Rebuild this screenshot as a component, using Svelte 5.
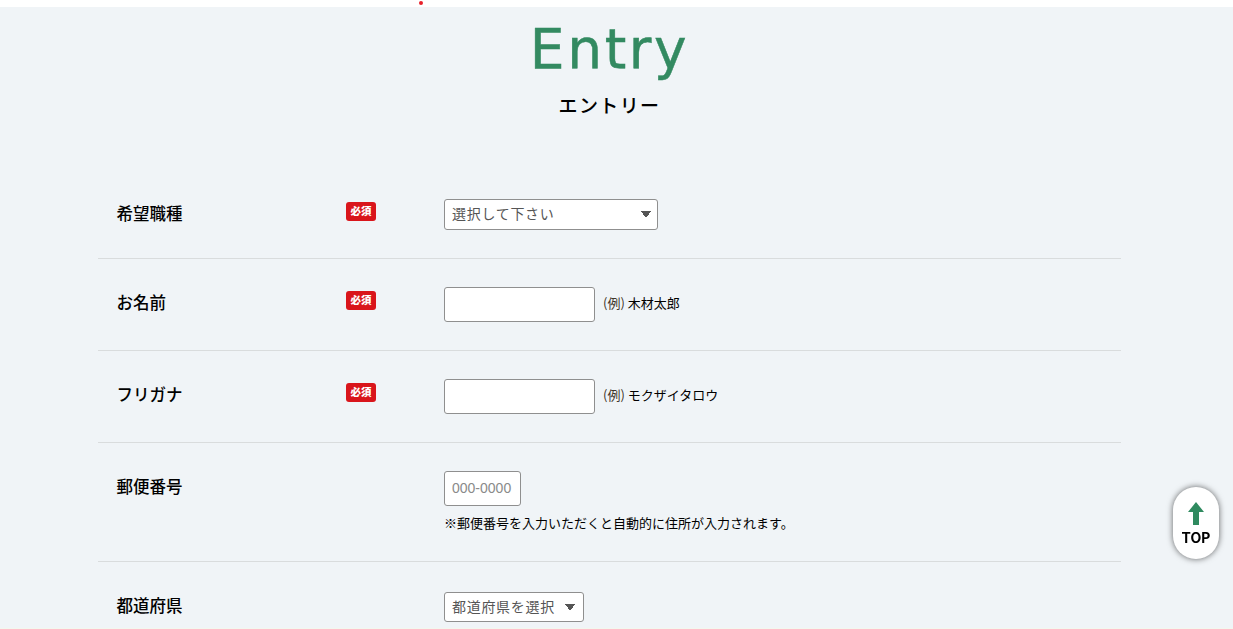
<script lang="ts">
  const prefectures = ["都道府県を選択", "北海道", "東京都", "大阪府"];
</script>

<div class="topbar"><span class="dot"></span></div>

<main class="page">
  <header class="heading">
    <h1>Entry</h1>
    <p>エントリー</p>
  </header>

  <form class="form">
    <div class="row first">
      <div class="label">希望職種</div>
      <div class="req"><span class="badge">必須</span></div>
      <div class="field">
        <select class="job">
          <option>選択して下さい</option>
        </select>
      </div>
    </div>

    <div class="row tall">
      <div class="label">お名前</div>
      <div class="req"><span class="badge">必須</span></div>
      <div class="field inline">
        <input class="text" type="text" />
        <span class="hint"><span class="rei">(例)</span> 木材太郎</span>
      </div>
    </div>

    <div class="row tall">
      <div class="label">フリガナ</div>
      <div class="req"><span class="badge">必須</span></div>
      <div class="field inline">
        <input class="text" type="text" />
        <span class="hint"><span class="rei">(例)</span> モクザイタロウ</span>
      </div>
    </div>

    <div class="row">
      <div class="label">郵便番号</div>
      <div class="req"></div>
      <div class="field">
        <input class="zip" type="text" placeholder="000-0000" />
        <p class="note">※郵便番号を入力いただくと自動的に住所が入力されます。</p>
      </div>
    </div>

    <div class="row">
      <div class="label">都道府県</div>
      <div class="req"></div>
      <div class="field">
        <select class="pref">
          {#each prefectures as pref}
            <option>{pref}</option>
          {/each}
        </select>
      </div>
    </div>
  </form>
</main>

<a class="totop" href="#top">
  <svg width="18" height="25" viewBox="0 0 18 25">
    <path d="M9 1 L17 11 H12 V24 H6 V11 H1 Z" fill="#2f8a5f" />
  </svg>
  <span>TOP</span>
</a>

<style>
  :global(html),
  :global(body) {
    height: 100%;
    overflow: hidden;
  }
  :global(body) {
    background: linear-gradient(to top, #f3f7ee 1px, #f0f4f7 1px);
    color: #000;
    font-family: "Liberation Sans", "Noto Sans CJK JP", sans-serif;
  }
  .topbar {
    height: 7px;
    background: #fff;
    position: relative;
  }
  .dot {
    position: absolute;
    left: 419px;
    top: 1px;
    width: 4px;
    height: 4px;
    border-radius: 50%;
    background: #e8202a;
  }
  .heading {
    width: 1023px;
    margin-left: 98px;
    text-align: center;
    height: 164px;
  }
  h1 {
    margin: 0;
    padding-top: 8px;
    font-family: "DejaVu Sans", sans-serif;
    font-size: 55px;
    font-weight: 400;
    line-height: 68px;
    letter-spacing: 2.6px;
    -webkit-text-stroke: 0.5px #338a61;
    color: #338a61;
  }
  .heading p {
    margin: 0;
    padding-top: 9px;
    font-size: 19px;
    line-height: 26px;
    letter-spacing: 1.4px;
    font-family: "Noto Sans CJK JP", sans-serif;
    font-weight: 500;
  }
  .form {
    width: 1023px;
    margin-left: 98px;
  }
  .row {
    display: grid;
    grid-template-columns: 248px 98px 1fr;
    padding: 28px 0;
    border-bottom: 1px solid #d9dcdd;
  }
  .label {
    padding: 1px 0 0 18.5px;
    font-family: "Noto Sans CJK JP", sans-serif;
    font-size: 16.5px;
    font-weight: 500;
    line-height: 28px;
  }
  .first .label {
    padding-top: 0;
  }
  .badge {
    display: block;
    width: 30px;
    height: 18.5px;
    margin-top: 3px;
    border-radius: 3px;
    background: #d9151b;
    color: #fff;
    font-family: "Noto Sans CJK JP", sans-serif;
    font-size: 10.5px;
    font-weight: 900;
    line-height: 18px;
    text-align: center;
  }
  .tall .badge {
    margin-top: 4px;
  }
  .inline {
    display: flex;
    align-items: center;
    gap: 8px;
  }
  select,
  input {
    box-sizing: border-box;
    background: #fff;
    border: 1px solid #8f8f8f;
    border-radius: 3px;
    margin: 0;
    font-family: "Noto Sans CJK JP", sans-serif;
    outline: none;
  }
  select {
    appearance: none;
    height: 31px;
    padding: 0 7px 3px;
    font-size: 14px;
    font-weight: 400;
    letter-spacing: 0.7px;
    color: #555;
    background-image: linear-gradient(to top right, transparent 50%, #555 50%),
      linear-gradient(to top left, transparent 50%, #555 50%);
    background-repeat: no-repeat;
    background-size: 5px 7px, 5px 7px;
    background-position: right 11px top 11px, right 6px top 11px;
  }
  .job {
    width: 214px;
  }
  .pref {
    width: 140px;
    height: 30px;
    margin-top: 2px;
    background-position: right 13px top 11px, right 8px top 11px;
  }
  .text {
    width: 151px;
    height: 35px;
  }
  .zip {
    width: 77px;
    height: 35px;
    padding: 0 7px 1px;
    font-family: "Liberation Sans", sans-serif;
    font-size: 14px;
    display: block;
  }
  .zip::placeholder {
    color: #8a8a8a;
    opacity: 1;
  }
  .hint {
    font-size: 13px;
    font-family: "Noto Sans CJK JP", sans-serif;
    padding-bottom: 4px;
    line-height: 19px;
  }
  .rei {
    color: #40352a;
  }
  .note {
    margin: 7px 0 0;
    font-family: "Noto Sans CJK JP", sans-serif;
    font-size: 13px;
    line-height: 19px;
    padding-bottom: 1px;
  }
  .totop {
    position: fixed;
    left: 1173px;
    top: 487px;
    width: 46px;
    height: 72px;
    box-sizing: border-box;
    padding-top: 14px;
    border-radius: 23px;
    background: #fff;
    box-shadow: 0 0 6px rgba(0, 0, 0, 0.6);
    display: flex;
    flex-direction: column;
    align-items: center;
    color: #000;
    text-decoration: none;
    font-family: Inter, "Liberation Sans", sans-serif;
    font-size: 14px;
    font-weight: 700;
    line-height: 16px;
  }
  .totop svg {
    display: block;
  }
  .totop span {
    margin-top: 4px;
    letter-spacing: 0;
  }
</style>
